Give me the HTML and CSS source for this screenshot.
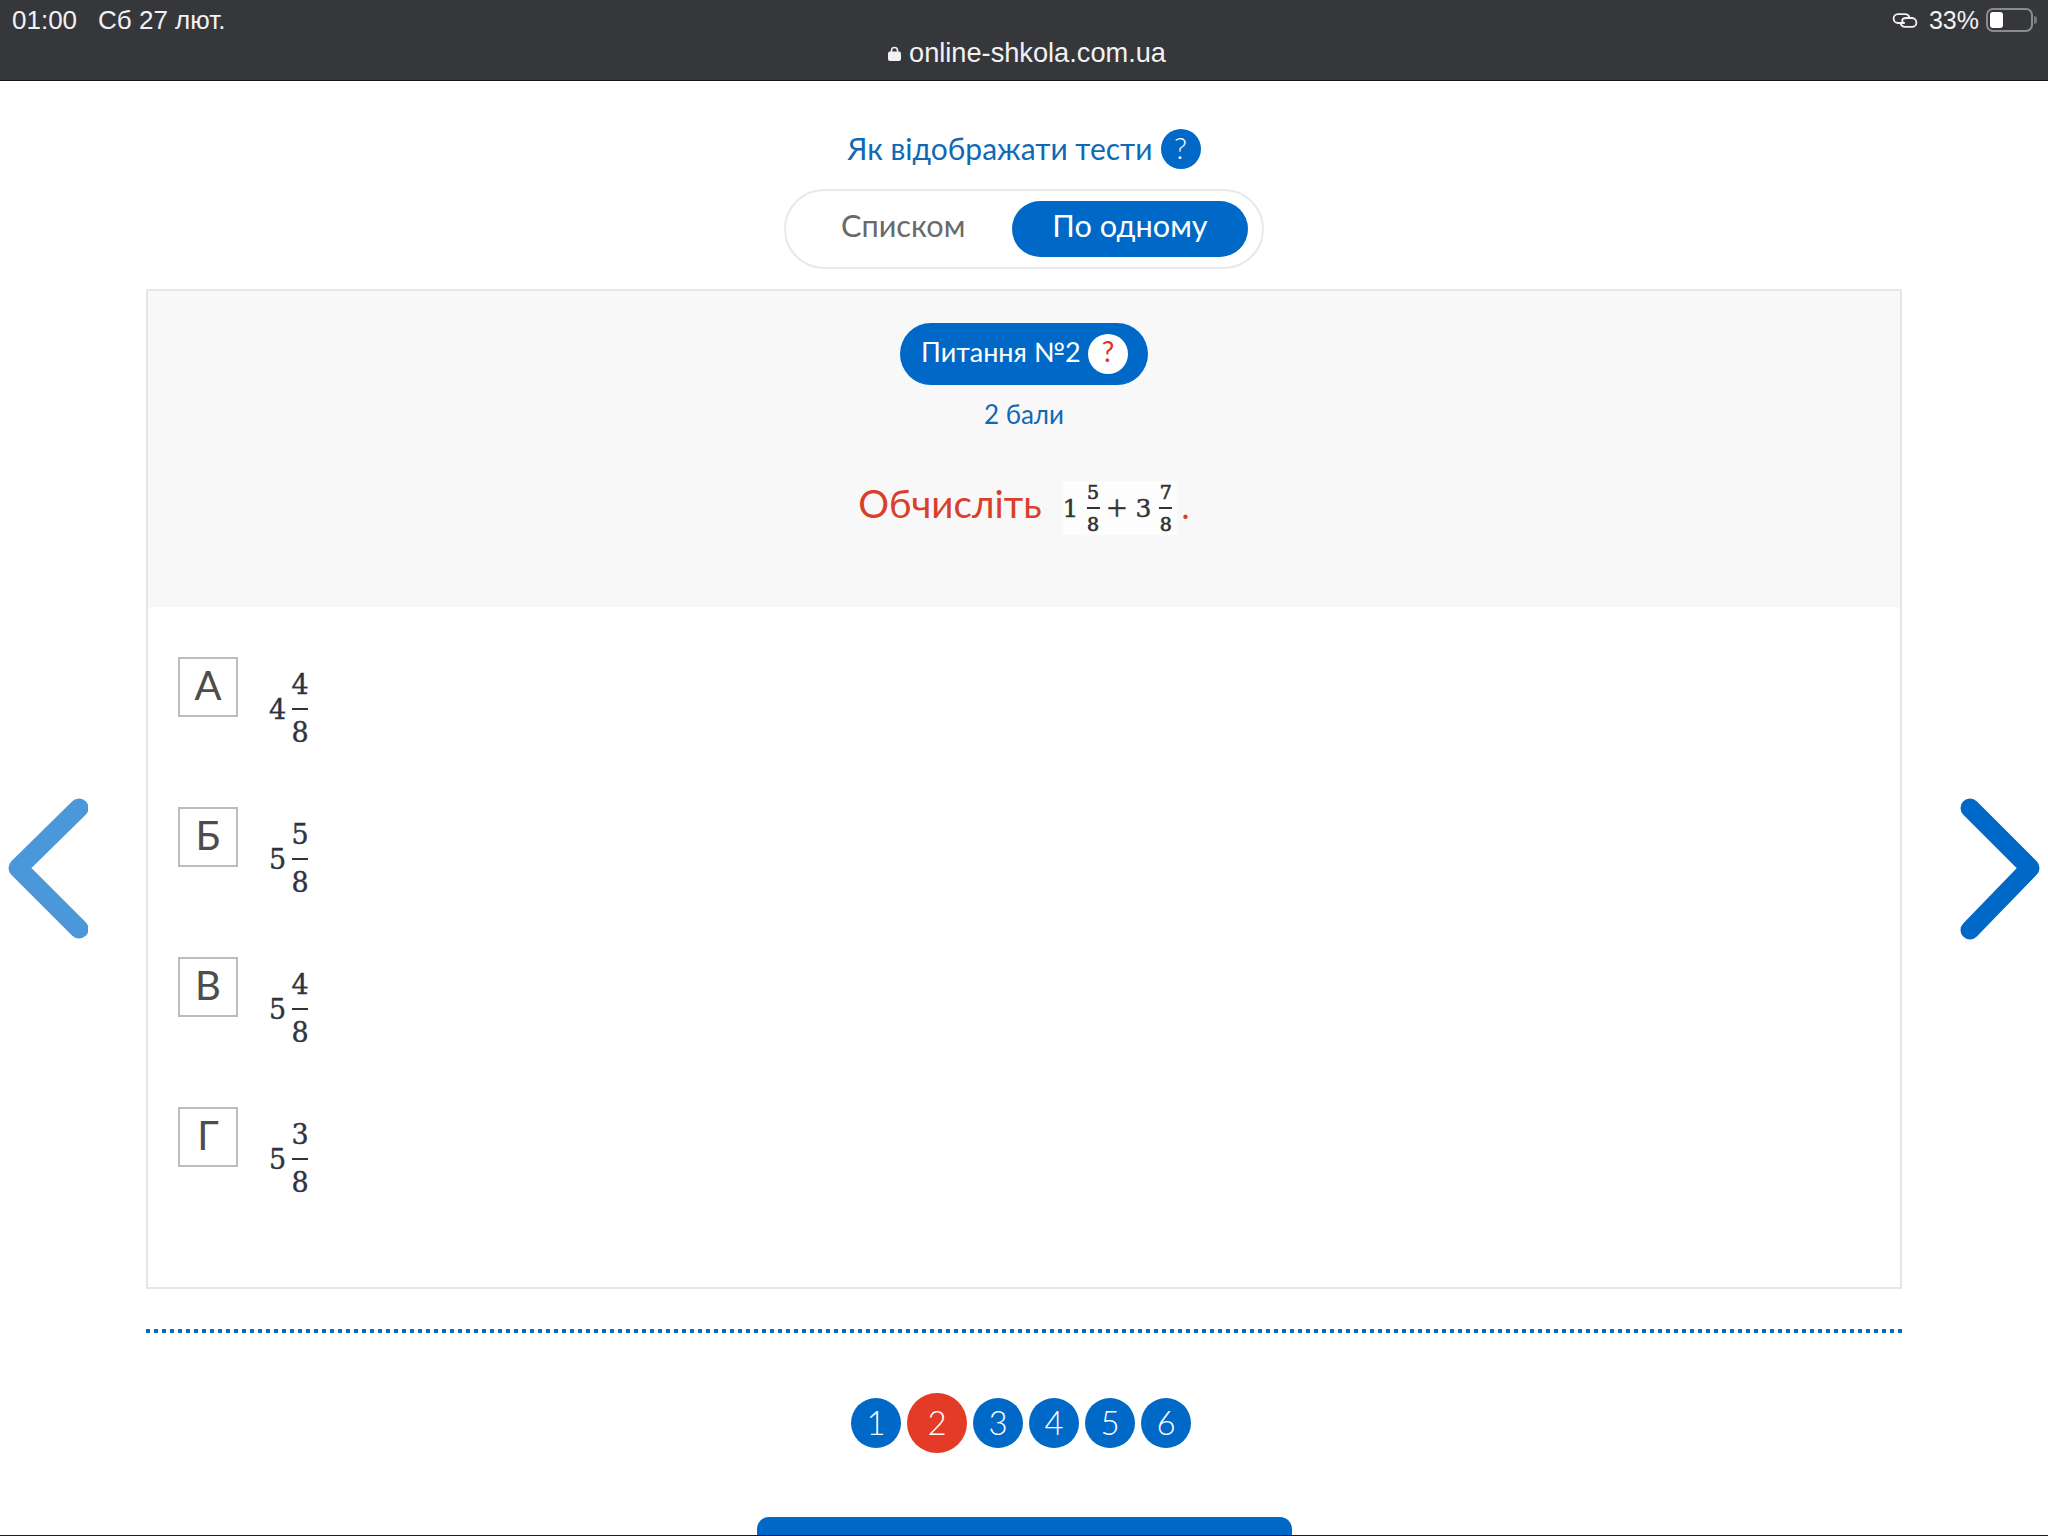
FILE: index.html
```html
<!DOCTYPE html>
<html lang="uk">
<head>
<meta charset="utf-8">
<title>Питання №2</title>
<link rel="stylesheet" href="styles.css">
</head>
<body>
<div class="page">
  <header class="browser">
    <div class="status">
      <div class="status-left"><span>01:00</span><span>Сб 27 лют.</span></div>
      <div class="status-right">
        <svg class="link-icon" viewBox="0 0 26 15" aria-hidden="true"><path d="M12 10H6a4.4 4.4 0 0 1 0-8.8h7c2.2 0 3.8 1.2 4.4 3"/><path d="M8.6 10.8c.6 1.800 2.200 3 4.400 3h7a4.400 4.400 0 0 0 0-8.800h-6c-2.500 0-3.800 1.500-3.800 2.800 0 1.200.8 2.200 2.600 2.200"/></svg>
        <span>33%</span>
        <span class="battery"><span class="battery-level"></span></span>
        <span class="battery-cap"></span>
      </div>
    </div>
    <div class="address">
      <svg class="lock" viewBox="0 0 13 15" aria-hidden="true"><path d="M3.500 7V4.500a3 3 0 0 1 6 0V7" fill="none" stroke="#f2f2f2" stroke-width="1.600"/><rect x="0" y="5.500" width="13" height="9.500" rx="2" fill="#f2f2f2"/></svg>
      <span>online-shkola.com.ua</span>
    </div>
  </header>

  <main class="content">
    <div class="view-title"><span class="view-label">Як відображати тести</span><span class="help">?</span></div>
    <div class="toggle">
      <span class="toggle-item">Списком</span>
      <span class="toggle-item active">По одному</span>
    </div>

    <section class="card">
      <div class="card-head">
        <div class="question-pill"><span class="pill-label">Питання №2</span><span class="pill-help">?</span></div>
        <div class="points">2 бали</div>
        <div class="question">
          <span class="question-word">Обчисліть</span>
          <span class="math-q">
            <span class="whole">1</span>
            <span class="frac"><span>5</span><i></i><span>8</span></span>
            <span class="plus">+</span>
            <span class="whole">3</span>
            <span class="frac"><span>7</span><i></i><span>8</span></span>
          </span>
          <span class="dot">.</span>
        </div>
      </div>
      <div class="answers">
        <div class="answer"><span class="letter">А</span><span class="math-a"><span class="whole">4</span><span class="frac"><span>4</span><i></i><span>8</span></span></span></div>
        <div class="answer"><span class="letter">Б</span><span class="math-a"><span class="whole">5</span><span class="frac"><span>5</span><i></i><span>8</span></span></span></div>
        <div class="answer"><span class="letter">В</span><span class="math-a"><span class="whole">5</span><span class="frac"><span>4</span><i></i><span>8</span></span></span></div>
        <div class="answer"><span class="letter">Г</span><span class="math-a"><span class="whole">5</span><span class="frac"><span>3</span><i></i><span>8</span></span></span></div>
      </div>
    </section>

    <div class="dots"></div>

    <nav class="pager">
      <span class="num">1</span>
      <span class="num current">2</span>
      <span class="num">3</span>
      <span class="num">4</span>
      <span class="num">5</span>
      <span class="num">6</span>
    </nav>

    <div class="finish"></div>
  </main>

  <svg class="arrow arrow-prev" viewBox="0 0 88 142" aria-hidden="true"><path d="M79 10 18 70l61 61"/></svg>
  <svg class="arrow arrow-next" viewBox="0 0 88 142" aria-hidden="true"><path d="M10 10l60 60-60 62"/></svg>
</div>
</body>
</html>
```
FILE: styles.css
```css
* { box-sizing: border-box; }
html, body { margin: 0; padding: 0; }
body { background: #fff; font-family: "Lato", "Liberation Sans", sans-serif; }

.page {
  position: relative;
  width: 2048px;
  height: 1536px;
  overflow: hidden;
  display: flex;
  flex-direction: column;
  border-bottom: 1px solid #1a1a1c;
}

/* browser chrome */
.browser {
  flex: none;
  height: 81px;
  background: #36373b;
  border-bottom: 1px solid #16161a;
  color: #f2f2f2;
  font-family: "Liberation Sans", sans-serif;
  font-size: 25px;
}
.status {
  height: 40px;
  display: flex;
  justify-content: space-between;
  align-items: center;
  padding: 0 11px 0 12px;
}
.status-left { display: flex; gap: 21px; font-size: 26px; }
.status-right { display: flex; align-items: center; }
.link-icon { width: 26px; height: 15px; margin-right: 11px; fill: none; stroke: #f2f2f2; stroke-width: 1.8; }
.battery {
  display: block;
  width: 47px;
  height: 24px;
  margin-left: 7px;
  padding: 2px;
  border: 2px solid #8a8b8e;
  border-radius: 7px;
}
.battery-level { display: block; width: 13px; height: 16px; background: #fff; border-radius: 3px; }
.battery-cap { display: block; width: 3px; height: 8px; margin-left: 1px; background: #77787b; border-radius: 0 3px 3px 0; }
.address {
  height: 26px;
  display: flex;
  justify-content: center;
  align-items: center;
  gap: 8px;
  padding-left: 6px;
  font-size: 27.2px;
}
.lock { width: 13px; height: 15px; }

/* page content */
.content {
  flex: 1;
  display: flex;
  flex-direction: column;
  align-items: center;
  padding-top: 48px;
}
.view-title {
  display: flex;
  align-items: center;
  gap: 8px;
  height: 40px;
  color: #0f69b5;
  font-size: 30px;
}
.view-label { padding-bottom: 3px; }
.help {
  width: 40px;
  height: 40px;
  padding-bottom: 4px;
  border-radius: 50%;
  background: #0068c6;
  color: #fff;
  display: flex;
  align-items: center;
  justify-content: center;
  font-size: 30px;
  font-weight: 300;
}
.toggle {
  display: flex;
  align-items: center;
  justify-content: space-between;
  width: 480px;
  height: 80px;
  margin-top: 20px;
  padding: 0 14px 0 55px;
  border: 2px solid #e8e8e8;
  border-radius: 40px;
  font-size: 30.7px;
  color: #6a6a6a;
}
.toggle-item { padding-bottom: 8px; }
.toggle-item.active {
  width: 236px;
  height: 56px;
  border-radius: 28px;
  background: #0068c6;
  color: #fff;
  display: flex;
  align-items: center;
  justify-content: center;
}

.card {
  width: 1756px;
  height: 1000px;
  margin-top: 20px;
  border: 2px solid #e6e6e6;
  flex: none;
}
.card-head {
  height: 316px;
  background: #f8f8f8;
  display: flex;
  flex-direction: column;
  align-items: center;
  padding-top: 32px;
}
.question-pill {
  display: flex;
  align-items: center;
  justify-content: space-between;
  width: 248px;
  height: 62px;
  padding: 0 20px 0 21px;
  border-radius: 31px;
  background: #0068c6;
  color: #fff;
  font-size: 27px;
}
.pill-label { padding-bottom: 6px; }
.pill-help {
  width: 40px;
  height: 40px;
  padding-bottom: 6px;
  border-radius: 50%;
  background: #fff;
  color: #d9352a;
  display: flex;
  align-items: center;
  justify-content: center;
  font-size: 28px;
}
.points {
  height: 32px;
  line-height: 32px;
  margin-top: 13px;
  color: #0f69b5;
  font-size: 26px;
}
.question {
  display: flex;
  align-items: center;
  margin-top: 51px;
  height: 54px;
  color: #d9402c;
  font-size: 38.5px;
}
.question-word { margin: 0 21px 10px 0; }
.math-q {
  display: flex;
  align-items: center;
  width: 114px;
  height: 54px;
  background: #fdfdfd;
  color: #333;
  font-family: "DejaVu Serif", serif;
  font-size: 25px;
  -webkit-text-stroke: 0.4px #333;
}
.plus { width: 21px; margin: 0 8px 0 7px; font-family: "Liberation Serif", serif; font-size: 36px; line-height: 1; text-align: center; }
.dot { margin: -6px 0 0 5px; font-size: 34px; }

.frac { display: flex; flex-direction: column; align-items: center; }
.frac i { display: block; background: currentColor; }
.math-q .frac { width: 13px; margin-left: 8px; font-size: 19px; line-height: 28px; -webkit-text-stroke: 0.7px #333; }
.math-q .frac i { flex: none; width: 13px; height: 2px; margin: 1px 0; }

.answers { display: flex; flex-direction: column; gap: 90px; padding: 50px 30px 0; }
.answer { display: flex; align-items: flex-start; gap: 31px; height: 60px; }
.letter {
  flex: none;
  width: 60px;
  height: 60px;
  padding-bottom: 5px;
  border: 2px solid #bdbdbd;
  display: flex;
  align-items: center;
  justify-content: center;
  color: #4d4d4d;
  font-size: 40px;
}
.math-a {
  display: flex;
  align-items: center;
  gap: 6px;
  height: 88px;
  margin-top: 8px;
  color: #2f3340;
  font-family: "DejaVu Serif", serif;
  font-size: 27px;
  -webkit-text-stroke: 0.4px #2f3340;
}
.math-a .frac { width: 16px; line-height: 40px; }
.math-a .frac i { flex: none; width: 16px; height: 2px; margin: 3px 0; }

.dots {
  flex: none;
  width: 1756px;
  height: 4px;
  margin-top: 40px;
  background: repeating-linear-gradient(90deg, #0f69b5 0 4px, transparent 4px 8px);
}

.pager {
  flex: none;
  display: flex;
  align-items: center;
  gap: 6px;
  height: 60px;
  margin: 60px 6px 0 0;
}
.num {
  width: 50px;
  height: 50px;
  padding-bottom: 2px;
  border-radius: 50%;
  background: #0068c6;
  color: #fff;
  display: flex;
  align-items: center;
  justify-content: center;
  font-size: 33px;
  font-weight: 300;
}
.num.current { width: 60px; height: 60px; background: #e33b25; }

.finish {
  flex: none;
  width: 535px;
  height: 40px;
  margin-top: 64px;
  border-radius: 12px 12px 0 0;
  background: #0068c6;
}

.arrow {
  position: absolute;
  top: 798px;
  width: 88px;
  height: 142px;
  fill: none;
  stroke-width: 19;
  stroke-linecap: round;
  stroke-linejoin: round;
}
.arrow-prev { left: 0; stroke: #4a98d9; }
.arrow-next { left: 1960px; stroke: #0068c6; }
```
